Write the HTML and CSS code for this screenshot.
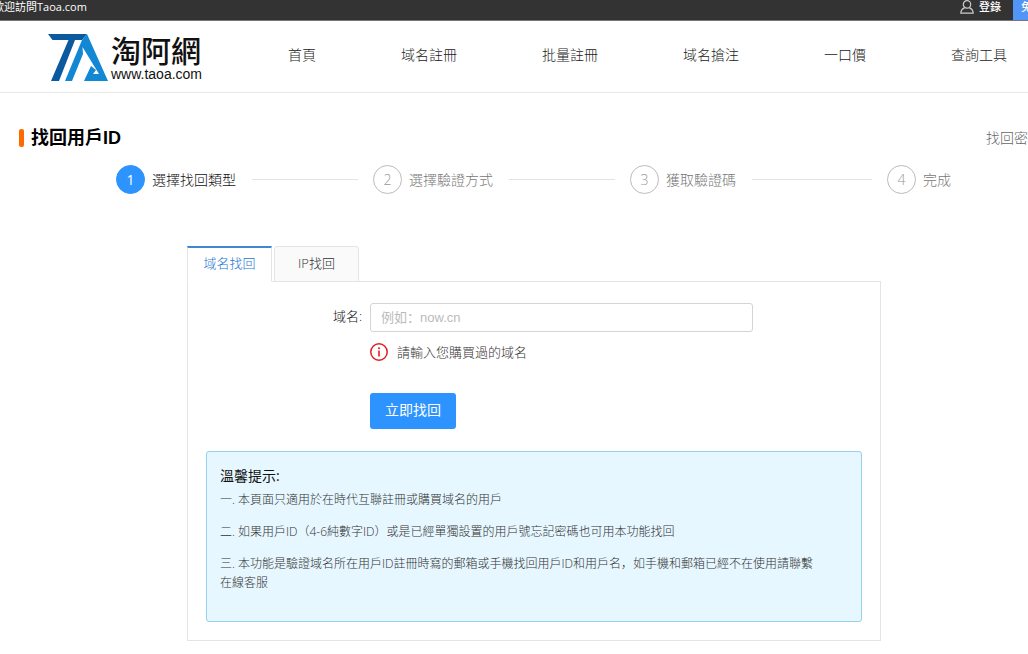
FILE: index.html
```html
<!DOCTYPE html>
<html lang="zh-CN">
<head>
<meta charset="utf-8">
<title>找回用戶ID</title>
<link rel="stylesheet" href="styles.css">
</head>
<body>
<div class="topbar">
  <span class="welcome">歡迎訪問Taoa.com</span>
  <a class="login" href="#">
    <svg class="user-icon" viewBox="0 0 14 14" width="14" height="14" aria-hidden="true"><circle cx="7" cy="4.4" r="3.7"/><path d="M4.8 7.6C2.4 8.6.8 10.5.8 13.2h12.4c0-2.7-1.6-4.6-4-5.6"/></svg>
    登錄
  </a>
  <a class="signup" href="#">免費註冊</a>
</div>

<header class="header">
  <a class="logo" href="#">
    <svg class="logo-mark" viewBox="0 0 60 48" width="60" height="48" aria-hidden="true">
      <path fill="#0b5a9f" d="M0 0H39L34 6H27L11 47H3L20.5 6H4.5Z"/>
      <path fill="#1287d4" d="M39 0L60 47H36L43 32L48 36L45 40H51L34.500 13L35 20L24 47H17L34 6Z"/>
    </svg>
    <span class="logo-text"><span class="logo-name">淘阿網</span><span class="logo-url">www.taoa.com</span></span>
  </a>
  <nav class="nav">
    <a href="#">首頁</a>
    <a href="#">域名註冊</a>
    <a href="#">批量註冊</a>
    <a href="#">域名搶注</a>
    <a href="#">一口價</a>
    <a href="#">查詢工具</a>
  </nav>
</header>

<main>
  <div class="title-row">
    <h1>找回用戶ID</h1>
    <a href="#">找回密碼</a>
  </div>

  <ol class="steps">
    <li class="current"><span class="num">1</span><span>選擇找回類型</span></li>
    <li><span class="num">2</span><span>選擇驗證方式</span></li>
    <li><span class="num">3</span><span>獲取驗證碼</span></li>
    <li><span class="num">4</span><span>完成</span></li>
  </ol>

  <section class="finder">
    <div class="tabs" role="tablist">
      <button class="tab active" type="button" role="tab" aria-selected="true">域名找回</button>
      <button class="tab" type="button" role="tab" aria-selected="false">IP找回</button>
    </div>
    <div class="panel">
      <form class="form">
        <label for="domain">域名:</label>
        <input id="domain" type="text" placeholder="例如：now.cn">
        <p class="notice">
          <svg viewBox="0 0 18 18" width="18" height="18" aria-hidden="true"><circle cx="9" cy="9" r="8.2" fill="none" stroke="#e02020" stroke-width="1.5"/><circle cx="9" cy="5.2" r="1" fill="#e02020"/><path d="M9 7.6V13.4" stroke="#e02020" stroke-width="1.6"/></svg>
          請輸入您購買過的域名
        </p>
        <button class="submit" type="submit">立即找回</button>
      </form>
      <aside class="tips">
        <h2>溫馨提示:</h2>
        <p>一. 本頁面只適用於在時代互聯註冊或購買域名的用戶</p>
        <p>二. 如果用戶ID（4-6純數字ID）或是已經單獨設置的用戶號忘記密碼也可用本功能找回</p>
        <p>三. 本功能是驗證域名所在用戶ID註冊時寫的郵箱或手機找回用戶ID和用戶名，如手機和郵箱已經不在使用請聯繫在線客服</p>
      </aside>
    </div>
  </section>
</main>
</body>
</html>
```
FILE: styles.css
```css
* { box-sizing: border-box; }
body {
  margin: 0;
  overflow-x: hidden;
  background: #fff;
  color: #222;
  font: 300 14px/20px "Open Sans", "Noto Sans CJK SC", sans-serif;
}
a { color: inherit; text-decoration: none; white-space: nowrap; }
h1, h2, p, ol { margin: 0; padding: 0; }
button, input { font: inherit; }

.topbar {
  display: flex;
  height: 21px;
  overflow: hidden;
  background: #333;
  border-bottom: 1px solid #777;
  color: #fff;
  font-size: 11px;
  font-weight: 400;
  line-height: 14px;
}
.welcome { margin-left: -7px; margin-right: auto; white-space: nowrap; }
.login { display: flex; gap: 5px; margin-right: 12px; font-weight: 500; }
.user-icon { fill: none; stroke: #ccc; stroke-width: 1.2; }
.signup { width: 15px; padding-left: 8px; background: #5195f7; font-weight: 500; }

.header {
  display: flex;
  align-items: center;
  height: 72px;
  padding-left: 48px;
  border-bottom: 1px solid #e8e8e8;
}
.logo { display: flex; align-items: center; gap: 3px; width: 240px; color: #111; }
.logo-mark { margin-top: 2px; }
.logo-text { display: flex; flex-direction: column; }
.logo-name { font: 500 30px/34px "Noto Sans CJK TC", sans-serif; }
.logo-url { font: 400 14px/16px "Liberation Sans", Arial, sans-serif; }
.nav { display: flex; gap: 85px; padding-bottom: 3px; }

.title-row {
  display: flex;
  align-items: center;
  justify-content: space-between;
  margin: 32px -14px 0 19px;
  height: 26px;
  color: #666;
}
h1 {
  display: flex;
  align-items: center;
  gap: 7px;
  color: #000;
  font: 700 18px/26px "Liberation Sans", "Noto Sans CJK SC", sans-serif;
}
h1::before { content: ""; width: 5px; height: 18px; border-radius: 2px; background: #ff6a00; }

.steps {
  display: grid;
  grid-template-columns: repeat(3, 1fr) auto;
  margin: 14px 77px 0 116px;
  list-style: none;
  color: #777;
}
.steps li { display: flex; align-items: center; gap: 7px; white-space: nowrap; }
.steps li:not(:last-child)::after { content: ""; flex: 1; height: 1px; margin: 0 15px 0 9px; background: #e3e3e3; }
.num {
  display: grid;
  place-items: center;
  width: 29px;
  height: 29px;
  border: 1px solid #bbb;
  border-radius: 50%;
  color: #999;
}
.steps .current { color: #111; }
.current .num { border-color: #2d94ff; background: #2d94ff; color: #fff; font-weight: 400; }

.finder { margin: 52px 147px 13px 187px; font-size: 13px; }
.tabs { position: relative; z-index: 1; display: flex; gap: 2px; margin-bottom: -1px; }
.tab {
  width: 85px;
  height: 36px;
  padding: 0 0 2px;
  border: 1px solid #e4e4e4;
  border-radius: 3px 3px 0 0;
  background: #fafafa;
  color: #333;
}
.tab.active {
  padding-bottom: 4px;
  border-top: 2px solid #3f87d0;
  border-bottom-color: #fff;
  border-radius: 0;
  background: #fff;
  color: #2476d2;
}
.panel { padding: 21px 18px 18px; border: 1px solid #e4e4e4; }
.form { display: grid; grid-template-columns: 156px minmax(0, 383px); column-gap: 8px; }
label { padding-top: 3px; text-align: right; color: #111; }
input {
  height: 29px;
  padding: 0 10px;
  border: 1px solid #d4d4d4;
  border-radius: 3px;
  color: #333;
  font: 400 13px "Liberation Sans", "Noto Sans CJK SC", sans-serif;
}
input::placeholder { color: #bbb; opacity: 1; }
.notice { grid-column: 2; display: flex; align-items: center; gap: 9px; margin-top: 10px; color: #333; }
.submit {
  grid-column: 2;
  justify-self: start;
  width: 86px;
  height: 36px;
  margin-top: 31px;
  padding: 0 0 2px;
  border: 0;
  border-radius: 3px;
  background: #2d94ff;
  color: #fff;
  font-size: 14px;
  font-weight: 400;
}
.tips {
  margin-top: 22px;
  padding: 14px 42px 16px 13px;
  border: 1px solid #97d0ec;
  border-radius: 3px;
  background: #e6f7ff;
  color: #333;
  font-size: 12px;
  line-height: 19px;
}
h2 { margin-bottom: 4px; color: #111; font-size: 14px; font-weight: 400; line-height: 20px; }
.tips p { margin-bottom: 13px; }
```
